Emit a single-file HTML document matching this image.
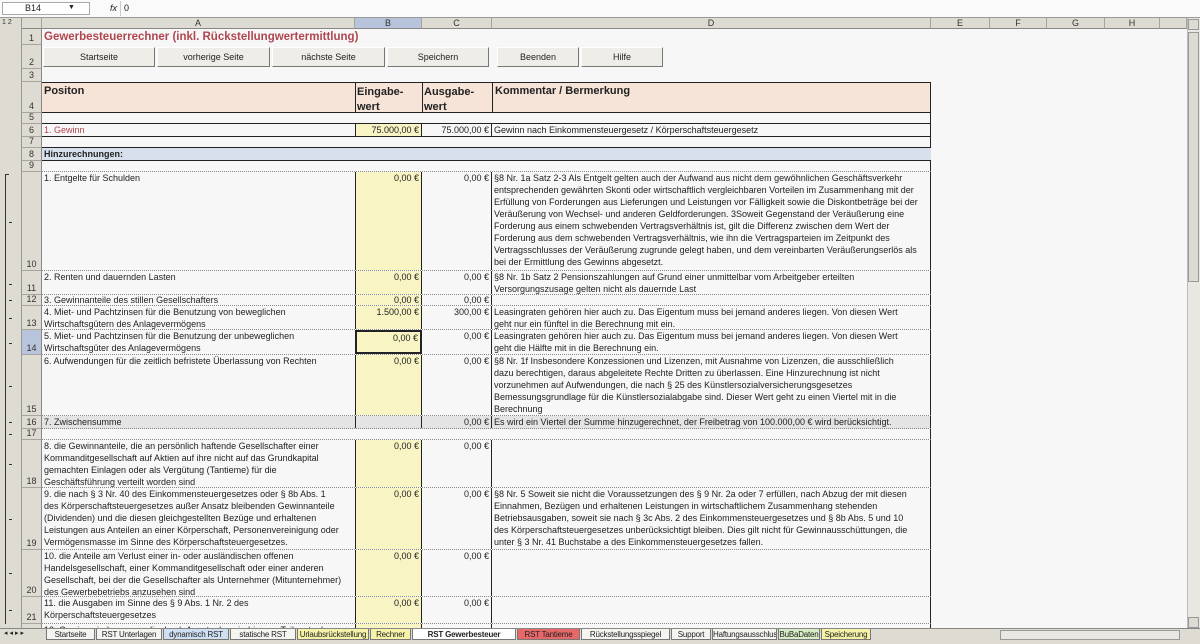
<!DOCTYPE html>
<html><head><meta charset="utf-8"><style>
*{margin:0;padding:0;box-sizing:border-box}
body{width:1200px;height:644px;overflow:hidden;background:#f7f7f7;font-family:"Liberation Sans",Arial,sans-serif;font-size:9px;color:#222;position:relative}
.a{position:absolute}
.fb{left:0;top:0;width:1200px;height:18px;background:#fafafa;border-bottom:1px solid #999}
.ch{top:18px;height:11px;background:#dedbd2;border-right:1px solid #a8a59c;border-bottom:1px solid #888;text-align:center;line-height:11px;font-size:9px;color:#333}
.rh{left:22px;width:20px;background:#dedbd2;border-bottom:1px solid #a8a59c;border-right:1px solid #888;text-align:center;font-size:9px;color:#333;display:flex;align-items:flex-end;justify-content:center;line-height:11px}
.row{left:42px;width:889px;border-bottom:1px dotted #888}
.c{position:absolute;top:0;bottom:0;overflow:hidden;white-space:nowrap;line-height:12px;padding:0 2px}
.A{left:0;width:313px}
.B{left:313px;width:67px;text-align:right;border-left:1px solid #222;border-right:1px solid #222}
.C{left:380px;width:70px;text-align:right;border-right:1px solid #222}
.D{left:450px;width:439px;border-right:1px solid #222}
.y{background:#f8f4c4}
.btn{top:47px;height:20px;background:#eeede8;border:1px solid #fff;border-right:1px solid #777;border-bottom:1px solid #777;text-align:center;line-height:19px;font-size:9px}
.tab{top:629px;height:11px;line-height:11px;font-size:8px;text-align:center;border:1px solid #777;border-top:none;background:#f4f4f0;white-space:nowrap;overflow:hidden;letter-spacing:-0.2px}
.dot{left:9px;width:3px;height:1px;background:#333}
</style></head><body>
<div class="a fb"></div>
<div class="a" style="left:2px;top:2px;width:88px;height:13px;background:#fff;border:1px solid #aaa;line-height:11px;padding-left:22px">B14</div>
<div class="a" style="left:68px;top:4px;font-size:7px">▼</div>
<div class="a" style="left:110px;top:3px;font-style:italic;font-size:9px">fx</div>
<div class="a" style="left:124px;top:3px">0</div>
<div class="a" style="left:120px;top:1px;width:2px;height:15px;border-left:1px solid #ccc"></div>

<div class="a" style="left:0;top:18px;width:22px;height:626px;background:#dedbd2;border-right:1px solid #999"></div>
<div class="a" style="left:2px;top:19px;font-size:7px;color:#333">1 2</div>
<div class="a" style="left:5px;top:174px;width:4px;height:450px;border-left:1px solid #333;border-top:1px solid #333"></div>
<div class="a dot" style="top:222px"></div><div class="a dot" style="top:284px"></div><div class="a dot" style="top:300px"></div><div class="a dot" style="top:318px"></div><div class="a dot" style="top:343px"></div><div class="a dot" style="top:386px"></div><div class="a dot" style="top:422px"></div><div class="a dot" style="top:434px"></div><div class="a dot" style="top:464px"></div><div class="a dot" style="top:519px"></div><div class="a dot" style="top:573px"></div><div class="a dot" style="top:610px"></div>

<div class="a ch" style="left:22px;width:20px"></div>
<div class="a ch" style="left:42px;width:313px">A</div>
<div class="a ch" style="left:355px;width:67px;background:#b8c4dc">B</div>
<div class="a ch" style="left:422px;width:70px">C</div>
<div class="a ch" style="left:492px;width:439px">D</div>
<div class="a ch" style="left:931px;width:59px">E</div>
<div class="a ch" style="left:990px;width:57px">F</div>
<div class="a ch" style="left:1047px;width:58px">G</div>
<div class="a ch" style="left:1105px;width:55px">H</div>
<div class="a ch" style="left:1160px;width:27px"></div>

<div class="a rh" style="top:29px;height:16px">1</div>
<div class="a rh" style="top:45px;height:24px">2</div>
<div class="a rh" style="top:69px;height:13px">3</div>
<div class="a rh" style="top:82px;height:31px">4</div>
<div class="a rh" style="top:113px;height:11px">5</div>
<div class="a rh" style="top:124px;height:13px">6</div>
<div class="a rh" style="top:137px;height:11px">7</div>
<div class="a rh" style="top:148px;height:13px">8</div>
<div class="a rh" style="top:161px;height:11px">9</div>
<div class="a rh" style="top:172px;height:99px">10</div>
<div class="a rh" style="top:271px;height:24px">11</div>
<div class="a rh" style="top:295px;height:11px">12</div>
<div class="a rh" style="top:306px;height:24px">13</div>
<div class="a rh" style="top:330px;height:25px;background:#b8c4dc">14</div>
<div class="a rh" style="top:355px;height:61px">15</div>
<div class="a rh" style="top:416px;height:13px">16</div>
<div class="a rh" style="top:429px;height:11px">17</div>
<div class="a rh" style="top:440px;height:48px">18</div>
<div class="a rh" style="top:488px;height:62px">19</div>
<div class="a rh" style="top:550px;height:47px">20</div>
<div class="a rh" style="top:597px;height:27px">21</div>
<div class="a rh" style="top:624px;height:5px"></div>

<div class="a" style="left:44px;top:31px;font-size:11.5px;font-weight:bold;color:#b0454f">Gewerbesteuerrechner (inkl. Rückstellungwertermittlung)</div>
<div class="a btn" style="left:43px;width:112px">Startseite</div>
<div class="a btn" style="left:157px;width:113px">vorherige Seite</div>
<div class="a btn" style="left:272px;width:113px">nächste Seite</div>
<div class="a btn" style="left:387px;width:102px">Speichern</div>
<div class="a btn" style="left:497px;width:82px">Beenden</div>
<div class="a btn" style="left:581px;width:82px">Hilfe</div>

<div class="a" style="left:42px;top:82px;width:889px;height:31px;background:#f6e4d8;border:1px solid #222;border-left:none"></div>
<div class="a" style="left:355px;top:82px;width:1px;height:31px;background:#222"></div>
<div class="a" style="left:422px;top:82px;width:1px;height:31px;background:#222"></div>
<div class="a" style="left:492px;top:82px;width:1px;height:31px;background:#222"></div>
<div class="a" style="left:44px;top:85px;font-size:11px;font-weight:bold">Positon</div>
<div class="a" style="left:357px;top:85px;font-size:11px;font-weight:bold;line-height:15px">Eingabe-<br>wert</div>
<div class="a" style="left:424px;top:85px;font-size:11px;font-weight:bold;line-height:15px">Ausgabe-<br>wert</div>
<div class="a" style="left:495px;top:85px;font-size:11px;font-weight:bold">Kommentar / Bermerkung</div>

<div class="a row" style="top:113px;height:11px;border-bottom:1px solid #222"><div class="c D" style="border-right:1px solid #222"></div></div>
<div class="a row" style="top:124px;height:13px;border-bottom:1px solid #222"><div class="c A" style="color:#b0454f">1. Gewinn</div><div class="c B y">75.000,00 €</div><div class="c C">75.000,00 €</div><div class="c D">Gewinn nach Einkommensteuergesetz / Körperschaftsteuergesetz</div></div>
<div class="a row" style="top:137px;height:11px;border-bottom:1px solid #222"><div class="c D"></div></div>
<div class="a row" style="top:148px;height:13px;background:#d7e0ec;border-bottom:1px solid #222"><div class="c A" style="font-weight:bold">Hinzurechnungen:</div></div>
<div class="a row" style="top:161px;height:11px"><div class="c D"></div></div>
<div class="a row" style="top:172px;height:99px"><div class="c A">1. Entgelte für Schulden</div><div class="c B y">0,00 €</div><div class="c C">0,00 €</div><div class="c D">§8 Nr. 1a Satz 2-3 Als Entgelt gelten auch der Aufwand aus nicht dem gewöhnlichen Geschäftsverkehr<br>entsprechenden gewährten Skonti oder wirtschaftlich vergleichbaren Vorteilen im Zusammenhang mit der<br>Erfüllung von Forderungen aus Lieferungen und Leistungen vor Fälligkeit sowie die Diskontbeträge bei der<br>Veräußerung von Wechsel- und anderen Geldforderungen. 3Soweit Gegenstand der Veräußerung eine<br>Forderung aus einem schwebenden Vertragsverhältnis ist, gilt die Differenz zwischen dem Wert der<br>Forderung aus dem schwebenden Vertragsverhältnis, wie ihn die Vertragsparteien im Zeitpunkt des<br>Vertragsschlusses der Veräußerung zugrunde gelegt haben, und dem vereinbarten Veräußerungserlös als<br>bei der Ermittlung des Gewinns abgesetzt.</div></div>
<div class="a row" style="top:271px;height:24px"><div class="c A">2. Renten und dauernden Lasten</div><div class="c B y">0,00 €</div><div class="c C">0,00 €</div><div class="c D">§8 Nr. 1b Satz 2 Pensionszahlungen auf Grund einer unmittelbar vom Arbeitgeber erteilten<br>Versorgungszusage gelten nicht als dauernde Last</div></div>
<div class="a row" style="top:295px;height:11px"><div class="c A" style="line-height:11px">3. Gewinnanteile des stillen Gesellschafters</div><div class="c B y" style="line-height:11px">0,00 €</div><div class="c C" style="line-height:11px">0,00 €</div><div class="c D"></div></div>
<div class="a row" style="top:306px;height:24px"><div class="c A">4. Miet- und Pachtzinsen für die Benutzung von beweglichen<br>Wirtschaftsgütern des Anlagevermögens</div><div class="c B y">1.500,00 €</div><div class="c C">300,00 €</div><div class="c D">Leasingraten gehören hier auch zu. Das Eigentum muss bei jemand anderes liegen. Von diesen Wert<br>geht nur ein fünftel in die Berechnung mit ein.</div></div>
<div class="a row" style="top:330px;height:25px"><div class="c A">5. Miet- und Pachtzinsen für die Benutzung der unbeweglichen<br>Wirtschaftsgüter des Anlagevermögens</div><div class="c B y" style="border:2px solid #222">0,00 €</div><div class="c C">0,00 €</div><div class="c D">Leasingraten gehören hier auch zu. Das Eigentum muss bei jemand anderes liegen. Von diesen Wert<br>geht die Hälfte mit in die Berechnung ein.</div></div>
<div class="a row" style="top:355px;height:61px"><div class="c A">6. Aufwendungen für die zeitlich befristete Überlassung von Rechten</div><div class="c B y">0,00 €</div><div class="c C">0,00 €</div><div class="c D">§8 Nr. 1f Insbesondere Konzessionen und Lizenzen, mit Ausnahme von Lizenzen, die ausschließlich<br>dazu berechtigen, daraus abgeleitete Rechte Dritten zu überlassen. Eine Hinzurechnung ist nicht<br>vorzunehmen auf Aufwendungen, die nach § 25 des Künstlersozialversicherungsgesetzes<br>Bemessungsgrundlage für die Künstlersozialabgabe sind. Dieser Wert geht zu einen Viertel mit in die<br>Berechnung</div></div>
<div class="a row" style="top:416px;height:13px;background:#e4e4e4"><div class="c A">7. Zwischensumme</div><div class="c B"></div><div class="c C">0,00 €</div><div class="c D">Es wird ein Viertel der Summe hinzugerechnet, der Freibetrag von 100.000,00 € wird berücksichtigt.</div></div>
<div class="a row" style="top:429px;height:11px"><div class="c D"></div></div>
<div class="a row" style="top:440px;height:48px"><div class="c A">8. die Gewinnanteile, die an persönlich haftende Gesellschafter einer<br>Kommanditgesellschaft auf Aktien auf ihre nicht auf das Grundkapital<br>gemachten Einlagen oder als Vergütung (Tantieme) für die<br>Geschäftsführung verteilt worden sind</div><div class="c B y">0,00 €</div><div class="c C">0,00 €</div><div class="c D"></div></div>
<div class="a row" style="top:488px;height:62px"><div class="c A">9. die nach § 3 Nr. 40 des Einkommensteuergesetzes oder § 8b Abs. 1<br>des Körperschaftsteuergesetzes außer Ansatz bleibenden Gewinnanteile<br>(Dividenden) und die diesen gleichgestellten Bezüge und erhaltenen<br>Leistungen aus Anteilen an einer Körperschaft, Personenvereinigung oder<br>Vermögensmasse im Sinne des Körperschaftsteuergesetzes.</div><div class="c B y">0,00 €</div><div class="c C">0,00 €</div><div class="c D">§8 Nr. 5 Soweit sie nicht die Voraussetzungen des § 9 Nr. 2a oder 7 erfüllen, nach Abzug der mit diesen<br>Einnahmen, Bezügen und erhaltenen Leistungen in wirtschaftlichem Zusammenhang stehenden<br>Betriebsausgaben, soweit sie nach § 3c Abs. 2 des Einkommensteuergesetzes und § 8b Abs. 5 und 10<br>des Körperschaftsteuergesetzes unberücksichtigt bleiben. Dies gilt nicht für Gewinnausschüttungen, die<br>unter § 3 Nr. 41 Buchstabe a des Einkommensteuergesetzes fallen.</div></div>
<div class="a row" style="top:550px;height:47px"><div class="c A">10. die Anteile am Verlust einer in- oder ausländischen offenen<br>Handelsgesellschaft, einer Kommanditgesellschaft oder einer anderen<br>Gesellschaft, bei der die Gesellschafter als Unternehmer (Mitunternehmer)<br>des Gewerbebetriebs anzusehen sind</div><div class="c B y">0,00 €</div><div class="c C">0,00 €</div><div class="c D"></div></div>
<div class="a row" style="top:597px;height:27px"><div class="c A">11. die Ausgaben im Sinne des § 9 Abs. 1 Nr. 2 des<br>Körperschaftsteuergesetzes</div><div class="c B y">0,00 €</div><div class="c C">0,00 €</div><div class="c D"></div></div>
<div class="a row" style="top:624px;height:5px;border:none"><div class="c A">12. Gewinnminderungen, die durch Ansatz des niedrigeren Teilwerts des</div><div class="c B y"></div><div class="c C"></div><div class="c D"></div></div>

<div class="a" style="left:1187px;top:18px;width:13px;height:611px;background:#e8e7e2;border-left:1px solid #bbb"></div>
<div class="a" style="left:1188px;top:19px;width:11px;height:11px;background:#dedbd2;border:1px solid #999"></div>
<div class="a" style="left:1188px;top:32px;width:11px;height:250px;background:#dedbd2;border:1px solid #999"></div>
<div class="a" style="left:1188px;top:617px;width:11px;height:11px;background:#dedbd2;border:1px solid #999"></div>

<div class="a" style="left:0;top:628px;width:1200px;height:16px;background:#dedbd2;border-top:1px solid #888"></div>
<div class="a" style="left:4px;top:629px;font-size:7px;letter-spacing:2px">◂◂▸▸</div>
<div class="a tab" style="left:46px;width:49px">Startseite</div>
<div class="a tab" style="left:96px;width:66px">RST Unterlagen</div>
<div class="a tab" style="left:163px;width:66px;background:#cfe0f2">dynamisch RST</div>
<div class="a tab" style="left:230px;width:66px">statische RST</div>
<div class="a tab" style="left:297px;width:72px;background:#f6f2a8">Urlaubsrückstellung</div>
<div class="a tab" style="left:370px;width:41px;background:#f6f2a8">Rechner</div>
<div class="a tab" style="left:412px;width:104px;background:#fff;font-weight:bold">RST Gewerbesteuer</div>
<div class="a tab" style="left:517px;width:63px;background:#e8686a">RST Tantieme</div>
<div class="a tab" style="left:581px;width:89px">Rückstellungsspiegel</div>
<div class="a tab" style="left:671px;width:40px">Support</div>
<div class="a tab" style="left:712px;width:65px">Haftungsausschluss</div>
<div class="a tab" style="left:778px;width:42px;background:#d6ecc4">BuBaDaten</div>
<div class="a tab" style="left:821px;width:50px;background:#f6f2a8">Speicherung</div>
<div class="a" style="left:1000px;top:630px;width:180px;height:10px;background:#e8e7e2;border:1px solid #999"></div>
</body></html>
